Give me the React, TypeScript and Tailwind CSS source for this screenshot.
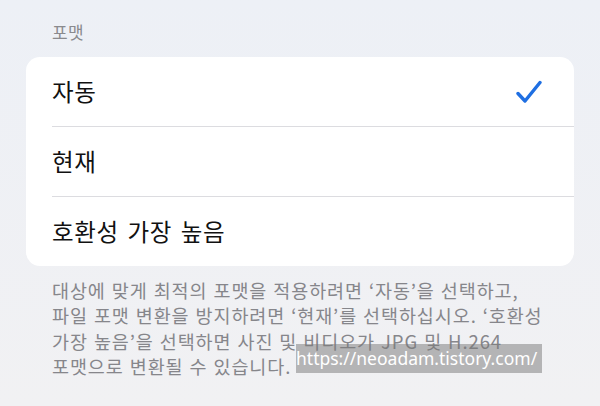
const options = ["자동", "현재", "호환성 가장 높음"];

function Check() {
  return (
    <svg width="26" height="24" viewBox="0 0 26 24" fill="none">
      <path
        d="M2 13.5 L9 21 L24 2.5"
        stroke="#1f6fe2"
        strokeWidth="3.4"
        strokeLinecap="round"
        strokeLinejoin="round"
      />
    </svg>
  );
}

export default function App() {
  return (
    <div
      className="relative w-[600px] h-[406px] overflow-hidden bg-gradient-to-b from-[#edf0f6] to-[#f1f1f3] px-[26px]"
      style={{ fontFamily: '"Noto Sans CJK KR", "Noto Sans", sans-serif' }}
    >
      {/* Section header */}
      <div className="pl-[26px] pt-[20px] h-[57px] text-[17px] leading-[24px] text-[#8a8a8e] tracking-[0.3px]">
        포맷
      </div>

      {/* Options card */}
      <div className="bg-white rounded-[14px] overflow-hidden">
        {options.map((label, i) => (
          <div key={label} className="pl-[26px]">
            {i > 0 && <div className="h-px bg-[#dcdce0]" />}
            <div className="h-[69px] flex items-center justify-between pr-[32px]">
              <span className="text-[23.5px] text-[#111] tracking-[0.6px] [word-spacing:3px]">
                {label}
              </span>
              {i === 0 && <Check />}
            </div>
          </div>
        ))}
      </div>

      {/* Footer description */}
      <p className="pl-[26px] pt-[12px] text-[18.5px] leading-[25.3px] text-[#86868b] tracking-[0.9px] [word-spacing:1px] whitespace-nowrap">
        대상에 맞게 최적의 포맷을 적용하려면 ‘자동’을 선택하고,
        <br />
        파일 포맷 변환을 방지하려면 ‘현재’를 선택하십시오. ‘호환성
        <br />
        가장 높음’을 선택하면 사진 및 비디오가 JPG 및 H.264
        <br />
        포맷으로 변환될 수 있습니다.
      </p>

      {/* Watermark */}
      <div
        className="absolute left-[296px] top-[344px] w-[246px] h-[29px] bg-[rgba(120,120,120,0.5)] text-white text-[17.5px] leading-[29px] whitespace-nowrap overflow-hidden"
        style={{ fontFamily: '"Noto Sans", sans-serif' }}
      >
        https://neoadam.tistory.com/
      </div>
    </div>
  );
}
